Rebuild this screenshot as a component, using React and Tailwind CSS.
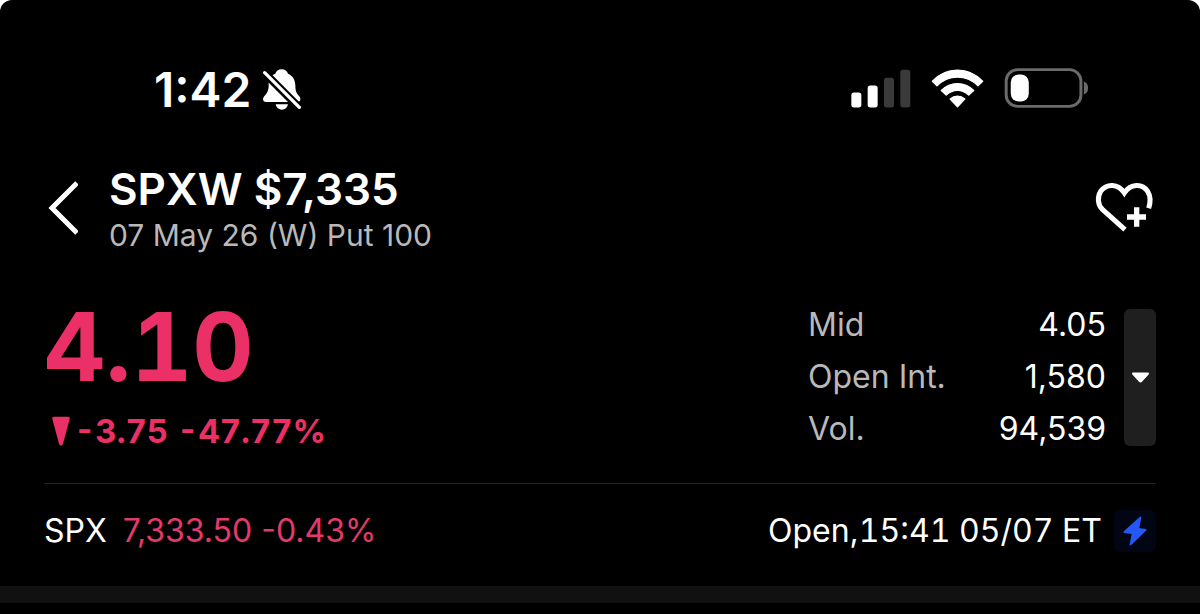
const STATS = [
  { label: 'Mid', value: '4.05' },
  { label: 'Open Int.', value: '1,580' },
  { label: 'Vol.', value: '94,539' },
];

function BellOff() {
  return (
    <svg viewBox="0 0 120 132" className="h-11 w-10" role="img" aria-label="Silent mode">
      <path
        fill="#fff"
        d="M56 4c10 0 17 6 19 13 14 6 22 18 22 36 0 14 3 22 9 29 4 4 6 7 6 12 0 6-4 8-9 8H9c-5 0-9-3-9-8 0-6 6-11 11-18 5-8 6-15 6-24 0-18 6-29 20-35C39 10 46 4 56 4z"
      />
      <path fill="#fff" d="M38 109h37c-2 10-9 16-18 16s-17-6-19-16z" />
      <path stroke="#000" strokeWidth="24" d="M-6 4l120 120" />
      <path stroke="#fff" strokeWidth="10" strokeLinecap="round" d="M5 14l104 104" />
    </svg>
  );
}

function Signal() {
  return (
    <svg viewBox="0 0 180 116" className="h-[39px] w-[60px]" role="img" aria-label="Signal, 2 of 4 bars">
      <rect x="1" y="70" width="30" height="45" rx="8" fill="#fff" />
      <rect x="50" y="49" width="30" height="66" rx="8" fill="#fff" />
      <rect x="99" y="26" width="30" height="89" rx="8" fill="#3a3a3a" />
      <rect x="148" y="2" width="30" height="113" rx="8" fill="#3a3a3a" />
    </svg>
  );
}

function Wifi() {
  return (
    <svg viewBox="0 0 160 118" className="h-[39px] w-[53px]" role="img" aria-label="Wi-Fi">
      <g fill="#fff" stroke="#fff" strokeWidth="4" strokeLinejoin="round">
        <path d="M4 37C46-8 114-8 156 37L142 51C107 16 53 16 18 51z" />
        <path d="M31 65C58 37 102 37 129 65L114 79C94 60 66 60 46 79z" />
        <path d="M58 91C71 79 89 79 102 91L80 114z" />
      </g>
    </svg>
  );
}

function Battery() {
  return (
    <svg viewBox="0 0 258 122" className="h-10 w-[85px]" role="img" aria-label="Battery low">
      <rect x="6" y="5" width="228" height="112" rx="35" fill="none" stroke="#6b6b6b" strokeWidth="9" />
      <path d="M243 41c9 3 13 11 13 20s-4 17-13 20z" fill="#6b6b6b" />
      <rect x="20" y="20" width="55" height="82" rx="24" fill="#fff" />
    </svg>
  );
}

export default function App() {
  return (
    <div className="bg-white">
      <main className="min-h-screen rounded-t-xl bg-black font-['Inter','Liberation_Sans',sans-serif] text-white">
        <div className="flex h-28 items-end justify-between pr-[111px] pl-[154px]">
          <div className="flex items-center gap-3">
            <time className="text-[48px] leading-11 font-semibold">1:42</time>
            <BellOff />
          </div>
          <div className="flex h-12 items-center gap-5">
            <Signal />
            <Wifi />
            <Battery />
          </div>
        </div>

        <header className="flex items-start justify-between px-11 pt-[52px]">
          <div className="flex items-start gap-[31px]">
            <button type="button" aria-label="Back" className="mt-4">
              <svg viewBox="0 0 34 56" className="h-14 w-[34px]" fill="none" stroke="#fff" strokeWidth="5">
                <path d="M33 3L8 28l25 25" />
              </svg>
            </button>
            <div>
              <h1 className="text-[44px] leading-[50px] font-semibold">SPXW $7,335</h1>
              <p className="text-[30px] leading-[42px] text-[#b9b9b9]">07 May 26 (W) Put 100</p>
            </div>
          </div>
          <button type="button" aria-label="Add to watchlist" className="mt-4">
            <svg viewBox="40 30 186 162" className="h-[54px] w-[62px]" fill="none" stroke="#fff" strokeWidth="15">
              <path d="M133 179L66 119C50 104 50 80 60 64C78 40 112 40 131 69C150 40 185 40 201 64C210 78 210 96 204 115" />
              <path strokeWidth="16" d="M139 141h57M168 112v58" />
            </svg>
          </button>
        </header>

        <section className="flex items-start justify-between px-11 pt-[43px]">
          <div className="font-bold text-[#eb3067]">
            <p className="text-[95px] leading-24 tabular-nums">4.10</p>
            <p className="mt-3 flex items-center gap-1 pl-2 text-[33px] leading-12 tabular-nums">
              <svg viewBox="0 0 54 90" className="h-[30px] w-[18px]" fill="currentColor" aria-label="Down">
                <path d="M6 2h42c4 0 6 3 5 7L33 83c-2 7-10 7-12 0L1 9C0 5 2 2 6 2z" />
              </svg>
              <span>-3.75 -47.77%</span>
            </p>
          </div>
          <div className="flex items-center gap-[18px]">
            <dl className="w-[298px] text-[32px] leading-[52px]">
              {STATS.map((s) => (
                <div key={s.label} className="flex justify-between">
                  <dt className="text-[#b9b9b9]">{s.label}</dt>
                  <dd>{s.value}</dd>
                </div>
              ))}
            </dl>
            <button
              type="button"
              aria-label="Show more statistics"
              className="flex h-[137px] w-8 items-center justify-center rounded-md bg-[#1f1f1f]"
            >
              <svg viewBox="0 0 50 32" className="h-[11px] w-[17px]" fill="#fff">
                <path d="M4 1h42c4 0 5 3 3 6L30 28c-3 4-7 4-10 0L1 7C-1 4 0 1 4 1z" />
              </svg>
            </button>
          </div>
        </section>

        <div className="mx-11 mt-7 flex items-center justify-between border-t border-[#242424] pt-[26px] pb-[34px] text-[32px] leading-[42px]">
          <p className="flex gap-4">
            <span>SPX</span>
            <span className="text-[#e23a6c]">7,333.50 -0.43%</span>
          </p>
          <div className="flex items-center gap-3">
            <p>
              Open,<time className="tabular-nums">15:41 05/07 ET</time>
            </p>
            <button
              type="button"
              aria-label="Real-time quotes"
              className="flex size-[42px] items-center justify-center rounded-md bg-[#020513]"
            >
              <svg viewBox="0 0 70 90" className="h-[30px] w-6" fill="#2457f5">
                <path d="M50 2c3-2 5 0 4 4L48 36l19 3c3 1 3 3 1 5L24 87c-4 3-6 1-5-3l6-30-22-3c-3-1-3-4-1-6z" />
              </svg>
            </button>
          </div>
        </div>
        <div className="h-[17px] bg-[#111111]" />
      </main>
    </div>
  );
}
